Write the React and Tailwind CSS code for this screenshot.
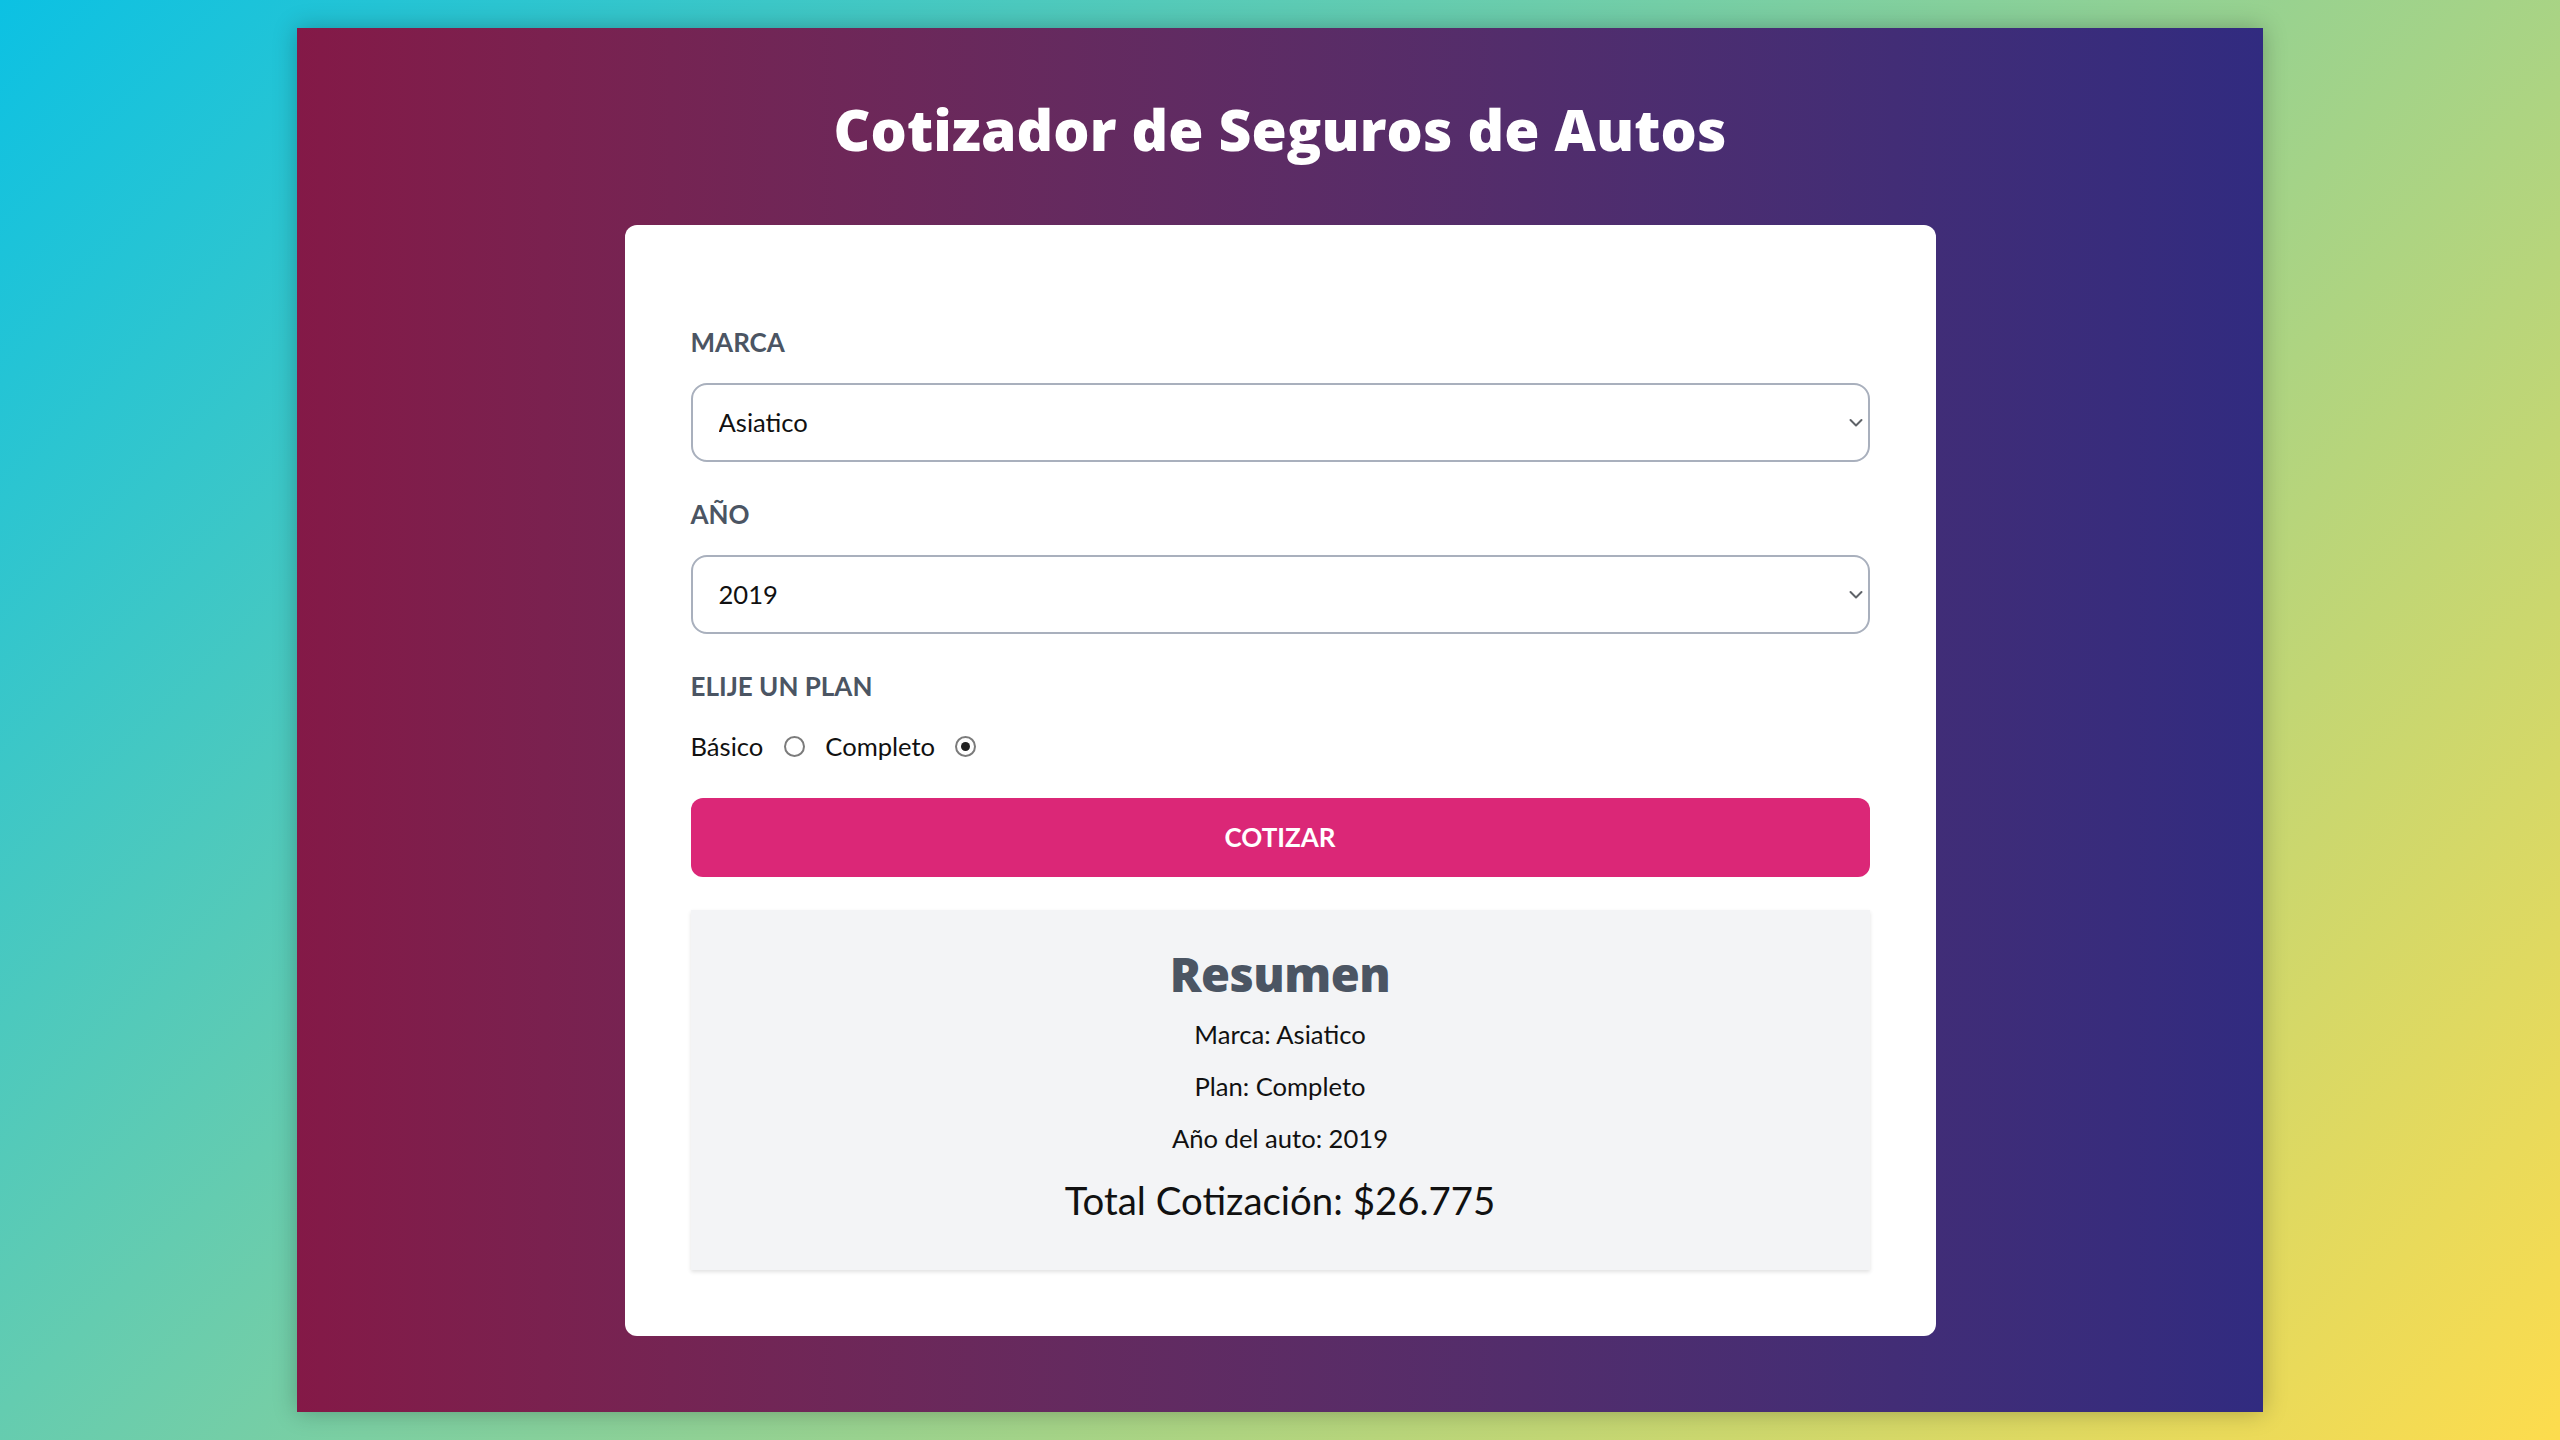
import React, { useState } from "react";

const font = { fontFamily: "Lato, 'Open Sans', sans-serif" };
const heavy = { fontFamily: "'Open Sans', 'Noto Sans', sans-serif" };

function Chevron() {
    return (
        <svg
            className="absolute right-[7px] top-1/2 -translate-y-1/2 pointer-events-none"
            width="14"
            height="9"
            viewBox="0 0 14 9"
            fill="none"
        >
            <path d="M1.5 1.5L7 7L12.5 1.5" stroke="#5f6368" strokeWidth="2" strokeLinecap="round" strokeLinejoin="round" />
        </svg>
    );
}

function Radio({ checked, onClick }) {
    return (
        <span
            onClick={onClick}
            className="w-[21px] h-[21px] rounded-full border-2 border-[#7b7b7b] bg-white flex items-center justify-center cursor-pointer"
        >
            {checked && <span className="w-[9px] h-[9px] rounded-full bg-[#222]" />}
        </span>
    );
}

function App() {
    const [marca, setMarca] = useState("Asiatico");
    const [year, setYear] = useState("2019");
    const [plan, setPlan] = useState("Completo");

    return (
        <div
            className="min-h-screen w-full flex justify-center pt-[28px] pb-[28px] bg-[linear-gradient(135deg,#0cc1e3_0%,#7ccfa2_45%,#fddc4d_100%)]"
            style={font}
        >
            <div className="w-[1966px] h-[1384px] flex flex-col items-center bg-gradient-to-r from-[#841947] to-[#312b80] shadow-[0_0_22px_rgba(0,0,0,0.25)]">
                <h1
                    className="mt-[65px] text-white font-extrabold text-[57px] leading-[72px] tracking-[0.1px]"
                    style={heavy}
                >
                    Cotizador de Seguros de Autos
                </h1>

                <div className="mt-[60px] w-[1311px] bg-white rounded-[12px] px-[66px] pt-[64px] pb-[66px]">
                    <form className="pt-[34px]" onSubmit={(e) => e.preventDefault()}>
                        <label className="block uppercase font-bold text-[26px] leading-[38px] text-[#4b5563]">
                            Marca
                        </label>
                        <div className="relative mt-[22px]">
                            <select
                                value={marca}
                                onChange={(e) => setMarca(e.target.value)}
                                className="appearance-none w-full h-[79px] rounded-[16px] border-2 border-[#a9b0bd] bg-white pl-[26px] text-[25.6px] text-[#111] outline-none"
                            >
                                <option>Europeo</option>
                                <option>Americano</option>
                                <option>Asiatico</option>
                            </select>
                            <Chevron />
                        </div>

                        <label className="block mt-[33px] uppercase font-bold text-[26px] leading-[38px] text-[#4b5563]">
                            Año
                        </label>
                        <div className="relative mt-[22px]">
                            <select
                                value={year}
                                onChange={(e) => setYear(e.target.value)}
                                className="appearance-none w-full h-[79px] rounded-[16px] border-2 border-[#a9b0bd] bg-white pl-[26px] text-[25.6px] text-[#111] outline-none"
                            >
                                <option>2021</option>
                                <option>2020</option>
                                <option>2019</option>
                                <option>2018</option>
                            </select>
                            <Chevron />
                        </div>

                        <label className="block mt-[33px] uppercase font-bold text-[26px] leading-[38px] text-[#4b5563]">
                            Elije un plan
                        </label>
                        <div className="mt-[22px] flex items-center h-[38px] text-[25.6px] text-[#111]">
                            <span>Básico</span>
                            <span className="ml-[21px]">
                                <Radio checked={plan === "Básico"} onClick={() => setPlan("Básico")} />
                            </span>
                            <span className="ml-[20px]">Completo</span>
                            <span className="ml-[20px]">
                                <Radio checked={plan === "Completo"} onClick={() => setPlan("Completo")} />
                            </span>
                        </div>

                        <button
                            type="submit"
                            className="mt-[33px] w-full h-[79px] rounded-[12px] bg-[#db2777] text-white uppercase font-bold text-[26px]"
                        >
                            Cotizar
                        </button>
                    </form>

                    {/* resumen */}
                    <div className="mt-[33px] bg-[#f3f4f6] shadow-[0_2px_4px_rgba(0,0,0,0.12)] pt-[35px] pb-[44px] text-center">
                        <h2
                            className="font-extrabold text-[47px] leading-[58px] text-[#4b5563] tracking-[-0.5px]"
                            style={heavy}
                        >
                            Resumen
                        </h2>
                        <p className="mt-[12px] text-[25.6px] leading-[38px] text-[#111]">Marca: {marca}</p>
                        <p className="mt-[14px] text-[25.6px] leading-[38px] text-[#111]">Plan: {plan}</p>
                        <p className="mt-[14px] text-[25.6px] leading-[38px] text-[#111]">Año del auto: {year}</p>
                        <p className="mt-[17px] text-[38.4px] leading-[52px] text-[#111]">Total Cotización: $26.775</p>
                    </div>
                </div>
            </div>
        </div>
    );
}

export default App;
